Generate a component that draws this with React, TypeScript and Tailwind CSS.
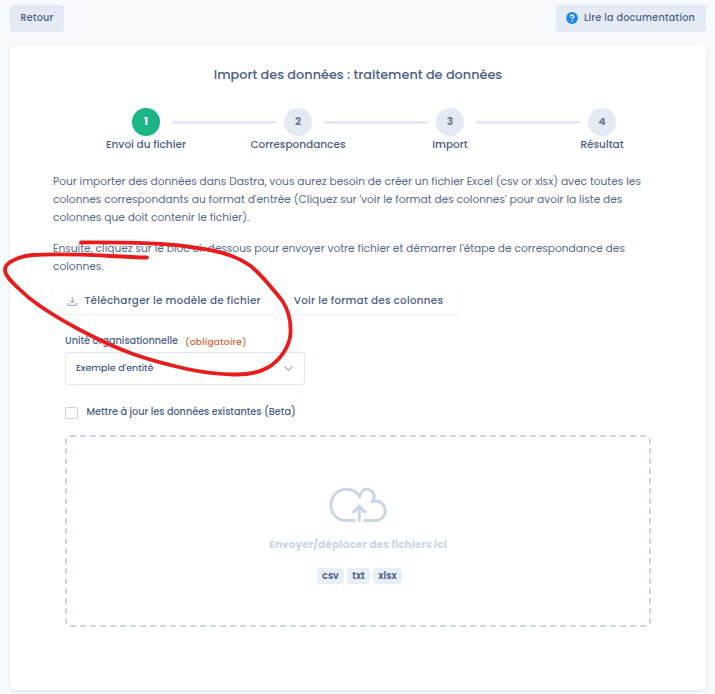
const steps = [
  { n: 1, label: "Envoi du fichier", active: true },
  { n: 2, label: "Correspondances", active: false },
  { n: 3, label: "Import", active: false },
  { n: 4, label: "Résultat", active: false },
];

const formats = [
  { name: "csv", width: "w-[27px]" },
  { name: "txt", width: "w-[23px]" },
  { name: "xlsx", width: "w-[29px]" },
];

function TopBar() {
  return (
    <header className="flex h-[27px] justify-between text-[9.65px] font-medium tracking-[0.24px]">
      <button className="w-[54px] rounded-[3px] bg-[#e4eaf4]">Retour</button>
      <button className="flex w-[150px] items-center rounded-[3px] bg-[#e4eaf4] pl-[10px]">
        <svg className="mr-[6px] -mt-px size-3" viewBox="0 0 12 12" fill="none">
          <circle cx="6" cy="6" r="5.9" fill="#1e88e5" />
          <path d="M4.3 4.6C4.4 3.5 5 3 6 3s1.7.6 1.7 1.4c0 1.2-1.6 1.2-1.6 2.5" stroke="#fff" strokeWidth="1.3" />
          <circle cx="6.05" cy="8.7" r=".8" fill="#fff" />
        </svg>
        <span>Lire la documentation</span>
      </button>
    </header>
  );
}

function Stepper() {
  return (
    <div className="mt-[23px] ml-[60px] w-[608px]">
      <div className="grid grid-cols-4">
        {steps.map((s) => (
          <div key={s.n} className="flex h-7 items-center pl-[62px]">
            <span
              className={
                s.active
                  ? "flex size-7 shrink-0 items-center justify-center rounded-full bg-[#1cb586] pb-[1px] text-[10.6px] font-bold text-white"
                  : "flex size-7 shrink-0 items-center justify-center rounded-full bg-[#e4eaf4] pb-[1px] text-[10.6px] font-bold text-[#6c7a92]"
              }
            >
              {s.n}
            </span>
            {s.n < 4 && <span className="-mr-[54px] mt-[1px] ml-3 h-[3px] w-[104px] shrink-0 rounded-full bg-[#e4eaf4]" />}
          </div>
        ))}
      </div>
      <div className="mt-px grid grid-cols-4 text-center text-[10.5px] leading-4 font-medium">
        {steps.map((s) => (
          <span key={s.n}>{s.label}</span>
        ))}
      </div>
    </div>
  );
}

function Intro() {
  return (
    <div className="mt-[20px] ml-[43px] text-[10.63px] leading-[18px] whitespace-nowrap text-[#56698a]">
      <p>
        Pour importer des données dans Dastra, vous aurez besoin de créer un fichier Excel (csv or xlsx) avec toutes les
        <br />
        colonnes correspondants au format d'entrée (Cliquez sur 'voir le format des colonnes' pour avoir la liste des
        <br />
        colonnes que doit contenir le fichier).
      </p>
      <p className="mt-[13px]">
        Ensuite, cliquez sur le bloc ci-dessous pour envoyer votre fichier et démarrer l'étape de correspondance des
        <br />
        colonnes.
      </p>
    </div>
  );
}

function Actions() {
  return (
    <div className="mt-[13px] ml-[43px] flex h-[25px] gap-1 text-[10.4px] font-medium tracking-[0.24px]">
      <button className="flex w-[222px] items-center rounded-[3px] pb-[2px] pl-[14px] whitespace-nowrap shadow-[0_1px_2px_rgba(60,80,120,0.12)]">
        <svg className="mt-[2px] mr-[7px] h-[9px] w-[10.5px]" viewBox="0 0 11 10" fill="none" stroke="#8195b2">
          <path d="M5.5.3v6.2M2.9 4l2.6 2.6L8.1 4M.6 6.7v2.5h9.8V6.7" />
        </svg>
        Télécharger le modèle de fichier
      </button>
      <button className="w-[179px] rounded-[3px] pb-[2px] shadow-[0_1px_2px_rgba(60,80,120,0.12)]">
        Voir le format des colonnes
      </button>
    </div>
  );
}

function UnitField() {
  return (
    <div className="mt-[19px] ml-[55px] text-[9.68px] font-medium">
      <label className="flex h-4 items-center gap-[7px]">
        <span className="pt-px">Unité organisationnelle</span>
        <span className="pt-px text-[9.2px] tracking-[0.18px] text-[#d9643a]">(obligatoire)</span>
      </label>
      <div className="mt-[3px] flex h-[33px] w-[240px] items-center justify-between rounded-[3px] border border-[#dfe7f5] pr-[11px] pl-[10px] text-[9.5px] font-normal text-[#173a75]">
        <span>Exemple d'entité</span>
        <svg className="h-[5px] w-[9px]" viewBox="0 0 9 5" fill="none" stroke="#a3b3cb" strokeWidth="1.2">
          <path d="M.6.5l3.9 3.8L8.4.5" />
        </svg>
      </div>
      <label className="mt-[18px] flex h-[18px] items-center gap-[8.5px]">
        <span className="mt-[2px] h-3 w-[13px] rounded-[1px] border border-[#c9d5e5] bg-[#fafaff]" />
        <span className="pt-px">Mettre à jour les données existantes (Beta)</span>
      </label>
    </div>
  );
}

function DropZone() {
  return (
    <div className="relative mt-[14px] ml-[55px] flex h-[192px] w-[586px] flex-col items-center pt-[52px]">
      <svg className="absolute inset-0" width="586" height="192" fill="none">
        <rect x="1" y="1" width="584" height="190" rx="4" stroke="#cbd6e4" strokeWidth="2" strokeDasharray="6 4" />
      </svg>
      <svg className="h-[36px] w-[58px]" viewBox="0 0 58 36" fill="none" stroke="#cbd6e4" strokeWidth="3" strokeLinecap="round" strokeLinejoin="round">
        <path d="M25.3 33.4H17C8.2 33.4 2 26.7 2 18.1 2 9.2 9 2.2 17.6 2.2c6 0 10.8 3 13.1 7.7" />
        <path d="M30.7 9.7c1-4.7 3.7-7.5 7-7.5 4.3 0 7.6 3.3 7.6 7.4 0 1.7-.8 3.700-2.500 5 7-2.400 13.400 2.500 13.400 9.300 0 5.600-4.300 9.500-9.500 9.500H35.500" />
        <path d="M30.3 33.5V19.7M24.5 25.1l5.8-5.8 5.8 5.8" />
      </svg>
      <p className="mt-[14px] text-[10.64px] leading-4 font-bold text-[#cbd6e4]">Envoyer/déplacer des fichiers ici</p>
      <div className="mt-[15px] ml-[3px] flex gap-[3px] text-[9.6px] font-semibold">
        {formats.map((f) => (
          <span key={f.name} className={`${f.width} flex h-4 items-center justify-center rounded-[4px] bg-[#e6eef6]`}>
            {f.name}
          </span>
        ))}
      </div>
    </div>
  );
}

export default function App() {
  return (
    <div className="relative h-[694px] w-[715px] overflow-hidden bg-[#f6fafd] pt-[5px] pr-[9px] pl-[10px] font-['Poppins','Inter',sans-serif] text-[#4c6085] [font-feature-settings:'cv11']">
      <TopBar />
      <main className="mt-[13px] h-[645px] rounded-[5px] bg-white pt-[20px] shadow-[0_1px_3px_rgba(60,90,140,0.14)]">
        <h1 className="text-center text-[12.875px] leading-5 font-medium">Import des données : traitement de données</h1>
        <Stepper />
        <Intro />
        <Actions />
        <UnitField />
        <DropZone />
      </main>
      <svg className="pointer-events-none absolute top-0 left-0" width="715" height="694" fill="none">
        <path
          d="M81 242.5C115 242.3 158 242.5 187 246.5C210 249.5 232 253 250 265.5C257 271 263 278 267.5 283C273 289.5 278 295 282 300.5C288 309 291 321 290.5 333C290 346 280 361 267 368C256 374 243 375 230 374.3C215 373.8 201 372 187 369C169 365 150 360 133 354C115 347.5 97 339 80 330C66 322.5 53 315 40 306C31 300 24 294 17 287C10 280 5 275 5 270C5 266 8 263 12 261C18 257.5 26 255.5 33 255C50 253.8 67 254.3 83 254.7C105 255.5 127 257.3 147 257.5"
          stroke="#e81c1c"
          strokeWidth="3.8"
          strokeLinecap="round"
          strokeLinejoin="round"
        />
      </svg>
    </div>
  );
}
